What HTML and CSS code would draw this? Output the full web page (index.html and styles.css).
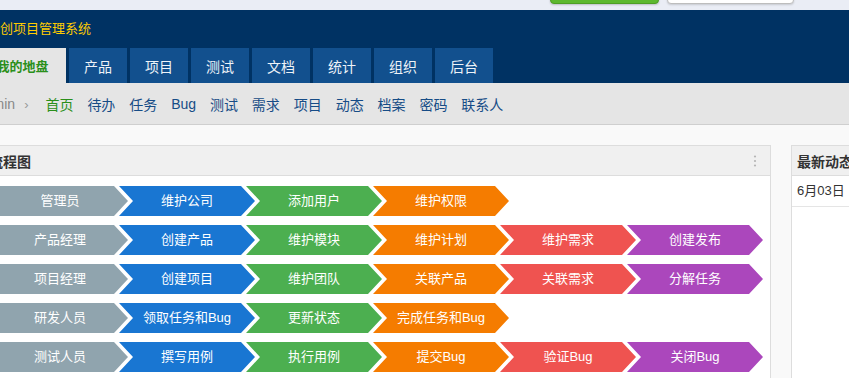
FILE: index.html
```html
<!DOCTYPE html>
<html lang="zh-CN">
<head>
<meta charset="utf-8">
<title>流程图</title>
<link rel="stylesheet" href="styles.css">
</head>
<body>
<div class="topstrip">
  <span class="tbtn tbtn-green"></span>
  <span class="tbtn tbtn-white"></span>
</div>
<header class="header">
  <div class="brand">创项目管理系统</div>
  <nav class="mainmenu">
    <a class="tab active">我的地盘</a>
    <a class="tab">产品</a>
    <a class="tab">项目</a>
    <a class="tab">测试</a>
    <a class="tab">文档</a>
    <a class="tab">统计</a>
    <a class="tab">组织</a>
    <a class="tab">后台</a>
  </nav>
</header>
<div class="subnav">
  <span class="user">admin</span>
  <span class="sep">›</span>
  <a class="sub active">首页</a>
  <a class="sub">待办</a>
  <a class="sub">任务</a>
  <a class="sub">Bug</a>
  <a class="sub">测试</a>
  <a class="sub">需求</a>
  <a class="sub">项目</a>
  <a class="sub">动态</a>
  <a class="sub">档案</a>
  <a class="sub">密码</a>
  <a class="sub">联系人</a>
</div>
<main class="content">
  <section class="panel flow-panel">
    <div class="panel-head">
      <span class="panel-title">流程图</span>
      <span class="more">
        <svg width="4" height="12" viewBox="0 0 4 12"><circle cx="2" cy="1.5" r="1.1" fill="#b5b5b5"/><circle cx="2" cy="6" r="1.1" fill="#b5b5b5"/><circle cx="2" cy="10.5" r="1.1" fill="#b5b5b5"/></svg>
      </span>
    </div>
    <div class="flow">
      <div class="flow-row">
        <span class="chev c-gray">管理员</span>
        <span class="chev c-blue">维护公司</span>
        <span class="chev c-green">添加用户</span>
        <span class="chev c-orange">维护权限</span>
      </div>
      <div class="flow-row">
        <span class="chev c-gray">产品经理</span>
        <span class="chev c-blue">创建产品</span>
        <span class="chev c-green">维护模块</span>
        <span class="chev c-orange">维护计划</span>
        <span class="chev c-red">维护需求</span>
        <span class="chev c-purple">创建发布</span>
      </div>
      <div class="flow-row">
        <span class="chev c-gray">项目经理</span>
        <span class="chev c-blue">创建项目</span>
        <span class="chev c-green">维护团队</span>
        <span class="chev c-orange">关联产品</span>
        <span class="chev c-red">关联需求</span>
        <span class="chev c-purple">分解任务</span>
      </div>
      <div class="flow-row">
        <span class="chev c-gray">研发人员</span>
        <span class="chev c-blue">领取任务和Bug</span>
        <span class="chev c-green">更新状态</span>
        <span class="chev c-orange">完成任务和Bug</span>
      </div>
      <div class="flow-row">
        <span class="chev c-gray">测试人员</span>
        <span class="chev c-blue">撰写用例</span>
        <span class="chev c-green">执行用例</span>
        <span class="chev c-orange">提交Bug</span>
        <span class="chev c-red">验证Bug</span>
        <span class="chev c-purple">关闭Bug</span>
      </div>
    </div>
  </section>
  <section class="panel side-panel">
    <div class="panel-head side-head">
      <span class="panel-title">最新动态</span>
    </div>
    <div class="side-row">6月03日</div>
  </section>
</main>
</body>
</html>
```

FILE: styles.css
```css
html, body {
  margin: 0;
  padding: 0;
}
body {
  width: 849px;
  height: 378px;
  overflow: hidden;
  background: #f9f9f9;
  font-family: "Liberation Sans", "Noto Sans CJK SC", sans-serif;
  color: #333;
}
a { text-decoration: none; }

.topstrip {
  height: 10px;
  background: #eaedf5;
  display: flex;
  padding-left: 550px;
  gap: 8px;
  overflow: hidden;
}
.tbtn {
  display: block;
  height: 30px;
  margin-top: -26px;
  border-radius: 4px;
  box-sizing: border-box;
}
.tbtn-green {
  width: 109px;
  background: #5cb82e;
  border: 1px solid #4d9e24;
  box-shadow: 0 1px 2px rgba(0,0,0,0.2);
}
.tbtn-white {
  width: 127px;
  background: #fff;
  border: 1px solid #bdbdbd;
  box-shadow: 0 1px 2px rgba(0,0,0,0.15);
}

.header {
  background: #003263;
  height: 73px;
  display: flex;
  flex-direction: column;
}
.brand {
  height: 38px;
  line-height: 38px;
  padding-left: 0;
  font-size: 13px;
  color: #ffcc00;
}
.mainmenu {
  display: flex;
  gap: 3px;
  height: 35px;
  margin-left: -21px;
}
.tab {
  display: flex;
  align-items: center;
  justify-content: center;
  height: 35px;
  width: 58px;
  background: #12508e;
  color: #eef3f8;
  font-size: 14px;
}
.tab.active {
  width: 87px;
  background: #e5e5e5;
  color: #2a8f1a;
  font-weight: bold;
  font-size: 13px;
}

.subnav {
  height: 40px;
  background: #e5e5e5;
  border-bottom: 1px solid #cfcfcf;
  display: flex;
  align-items: center;
  margin-left: -23px;
  font-size: 14px;
  padding-top: 1px;
  box-sizing: content-box;
}
.user {
  color: #888;
}
.sep {
  color: #999;
  margin: 0 10px 0 9px;
  font-size: 13px;
}
.sub {
  color: #164c86;
  margin-right: 13.9px;
}
.sub.active {
  color: #2a8f1a;
  margin-left: 7px;
}

.content {
  display: flex;
  gap: 20px;
  padding-top: 20px;
  margin-left: -22px;
  align-items: flex-start;
}
.panel {
  background: #fff;
  border: 1px solid #dddddd;
  box-sizing: border-box;
  flex-shrink: 0;
}
.flow-panel {
  width: 793px;
  height: 260px;
}
.side-panel {
  width: 200px;
  height: 260px;
}
.panel-head {
  height: 30px;
  background: #f0f0f0;
  border-bottom: 1px solid #dddddd;
  display: flex;
  align-items: center;
  padding: 0 10px;
  box-sizing: border-box;
}
.panel-title {
  font-size: 14px;
  font-weight: bold;
  color: #333;
}
.more {
  margin-left: auto;
  margin-right: 3px;
  display: flex;
}
.side-head {
  padding-left: 5px;
}
.side-row {
  height: 30px;
  line-height: 30px;
  padding-left: 5px;
  font-size: 13px;
  color: #333;
  border-bottom: 1px solid #e5e5e5;
}

.flow {
  padding: 10px 0 0 13px;
  display: flex;
  flex-direction: column;
  gap: 9px;
}
.flow-row {
  display: flex;
}
.chev {
  width: 136px;
  height: 30px;
  line-height: 30px;
  margin-right: -9px;
  text-align: center;
  color: #fff;
  font-size: 13px;
  clip-path: polygon(0 0, 122px 0, 136px 15px, 122px 30px, 0 30px, 14px 15px);
  flex-shrink: 0;
}
.chev.c-gray {
  clip-path: polygon(0 0, 122px 0, 136px 15px, 122px 30px, 0 30px);
}
.c-gray { background: #90a4ae; }
.c-blue { background: #1976d2; }
.c-green { background: #4caf50; }
.c-orange { background: #f57c00; }
.c-red { background: #ef5350; }
.c-purple { background: #ab47bc; }
```
